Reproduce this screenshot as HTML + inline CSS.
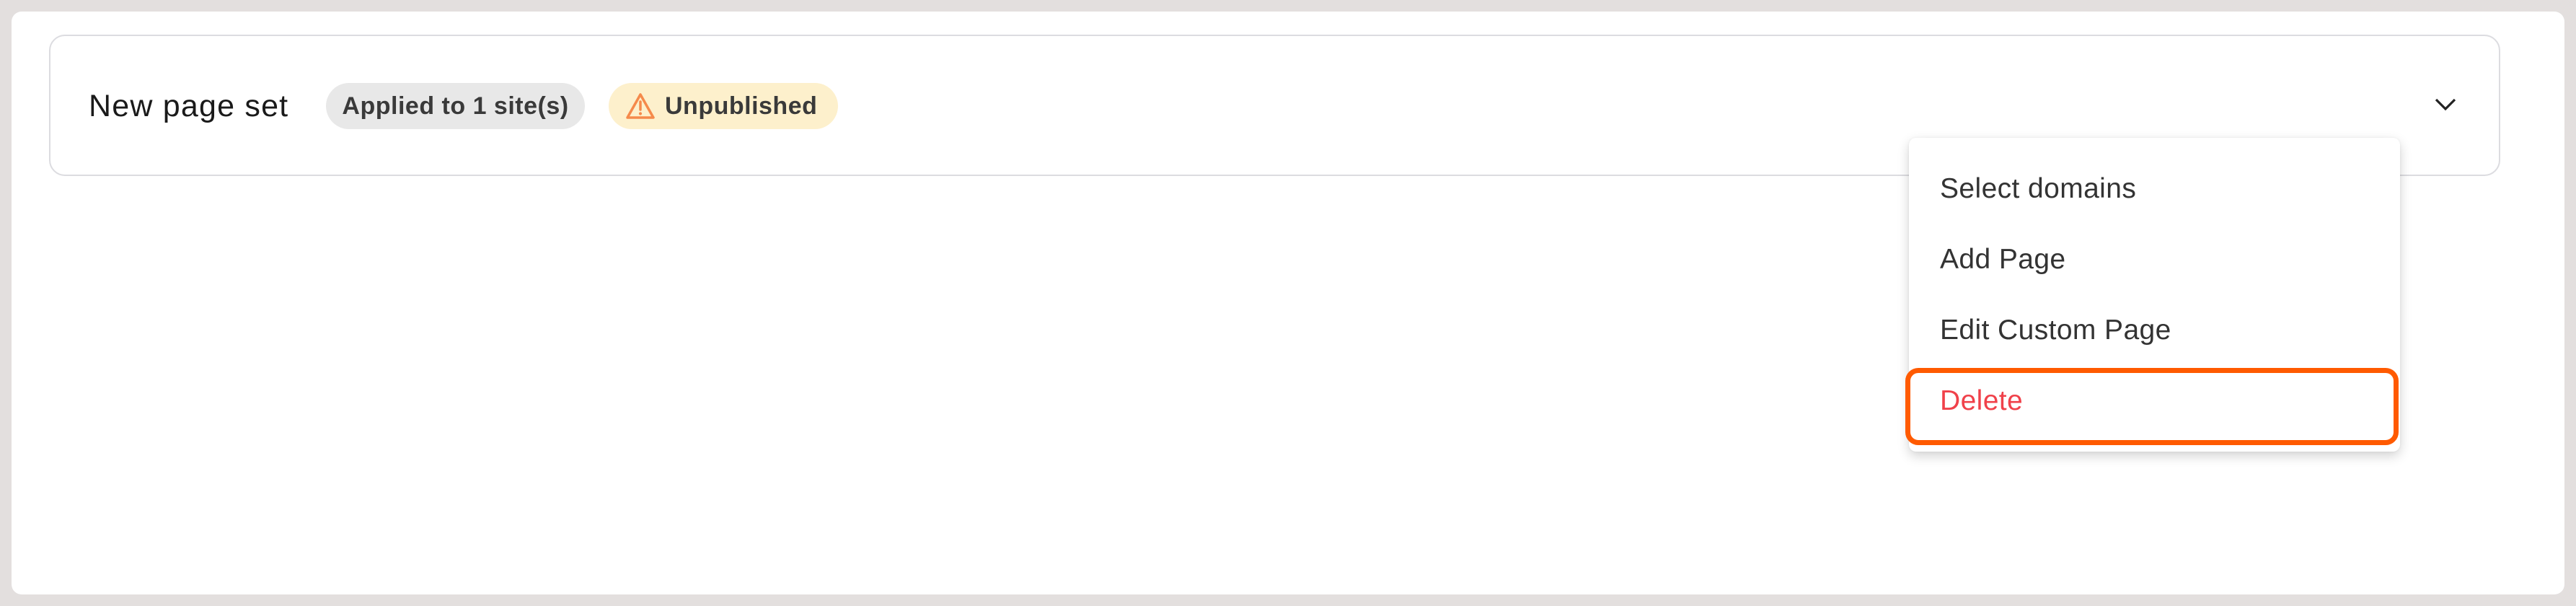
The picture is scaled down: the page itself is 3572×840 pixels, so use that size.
<!DOCTYPE html>
<html><head><style>
html,body{margin:0;padding:0;}
body{width:3572px;height:840px;background:#e3dfde;position:relative;overflow:hidden;font-family:"Liberation Sans",sans-serif;}
.inner{position:absolute;left:16px;top:16px;width:3540px;height:808px;background:#fff;border-radius:14px;}
.card{position:absolute;left:68px;top:48px;width:3399px;height:196px;border:2px solid #dcdce0;border-radius:22px;box-sizing:border-box;}
.title{position:absolute;left:123px;top:122px;font-size:43px;letter-spacing:1.2px;color:#1a1a1a;line-height:50px;}
.badge{position:absolute;top:115px;height:64px;border-radius:32px;font-size:34px;letter-spacing:0.5px;font-weight:bold;color:#3a3a3a;line-height:64px;box-sizing:border-box;white-space:nowrap;}
.b1{left:452px;width:359px;background:#e8e8e8;text-align:center;}
.b2{left:844px;width:318px;background:#fdf0cc;padding-left:78px;}
.menu{position:absolute;left:2647px;top:191px;width:681px;height:435px;background:#fff;border-radius:10px;box-shadow:0 6px 16px rgba(0,0,0,0.18),0 0 3px rgba(0,0,0,0.06);}
.item{position:absolute;left:43px;font-size:39px;letter-spacing:0.4px;color:#333;line-height:44px;}
.hl{position:absolute;left:2642px;top:510px;width:684px;height:107px;border:7px solid #ff5a00;border-radius:18px;box-sizing:border-box;}
</style></head><body>
<div class="inner"></div>
<div class="card"></div>
<div class="title">New page set</div>
<div class="badge b1">Applied to 1 site(s)</div>
<div class="badge b2">Unpublished</div>
<svg style="position:absolute;left:867px;top:128px" width="42" height="38" viewBox="0 0 42 38"><path d="M21 3 L39 35 L3 35 Z" fill="none" stroke="#f58a4b" stroke-width="3.5" stroke-linejoin="round"/><line x1="21" y1="13" x2="21" y2="24" stroke="#f58a4b" stroke-width="3.5" stroke-linecap="round"/><circle cx="21" cy="29.5" r="2.1" fill="#f58a4b"/></svg>
<svg style="position:absolute;left:3375px;top:134px" width="32" height="22" viewBox="0 0 32 22"><path d="M3 4 L16 17 L29 4" fill="none" stroke="#222" stroke-width="3.2"/></svg>
<div class="menu">
<div class="item" style="top:49px">Select domains</div>
<div class="item" style="top:147px">Add Page</div>
<div class="item" style="top:245px">Edit Custom Page</div>
<div class="item" style="top:343px;color:#f0414a">Delete</div>
</div>
<div class="hl"></div>
</body></html>
